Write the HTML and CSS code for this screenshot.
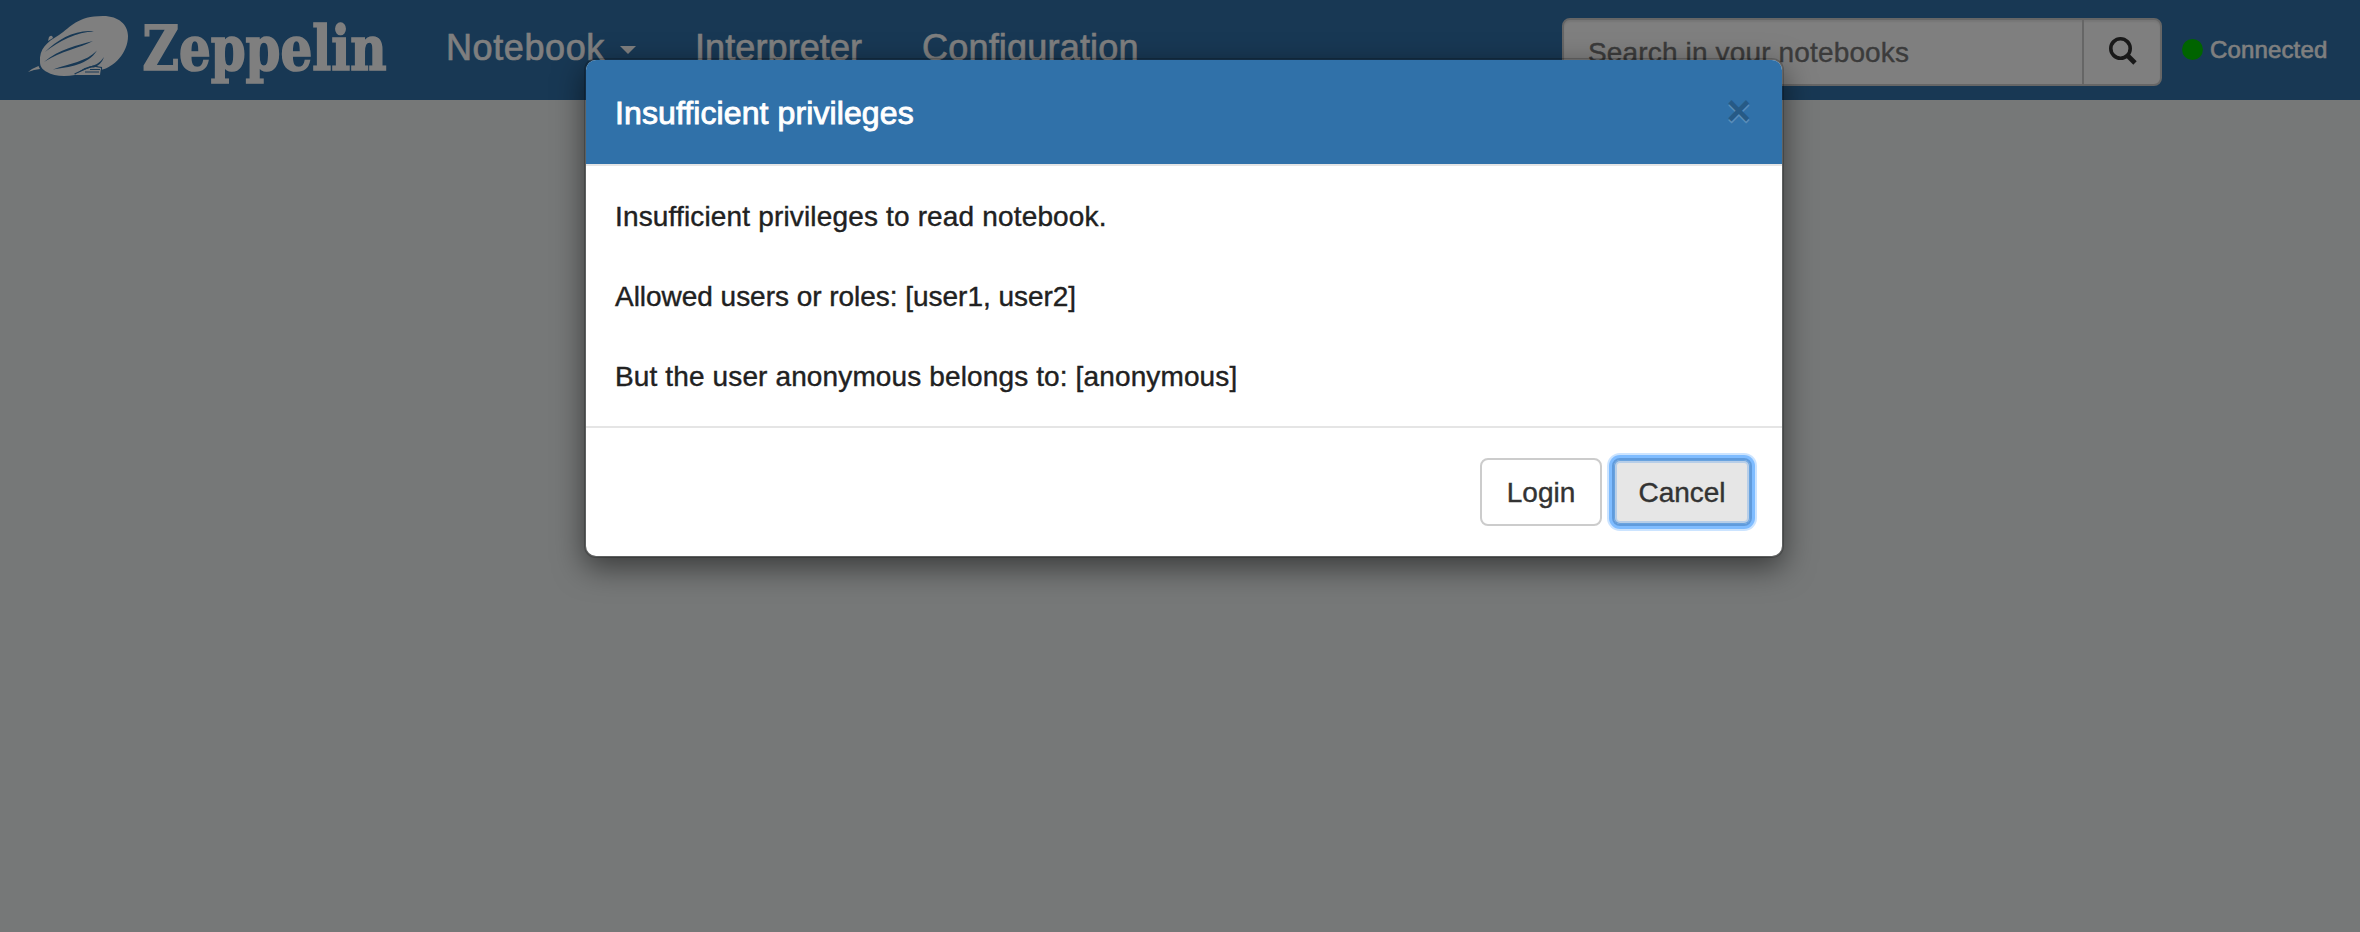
FILE: index.html
```
<!DOCTYPE html>
<html lang="en">
<head>
<meta charset="utf-8">
<title>Zeppelin</title>
<link rel="stylesheet" href="styles.css">
</head>
<body>
<header class="navbar">
  <a class="brand">
    <svg class="brand-logo" width="392" height="100" viewBox="0 0 392 100" aria-label="Zeppelin">
      <g fill="#fff">
        <path d="M40 62C39 49 47 42 59 35C71 27 77 16 103 16C119 16 128 25 128 36C128 53 114 67 101 70L97 66C88 66 84 68 80 71L75 75C64 77 53 76 47 72C43 70 40 67 40 62Z"/>
        <path d="M28 72L32 69L38.500 66L40 69L34 70Z"/>
        <path d="M48 41L49 37Q52 34 53 38Z"/>
        <path d="M75 74L84 70L93 66.500L101 67.500L100 75L76 75Z"/>
      </g>
      <g fill="#3071a9">
        <path d="M45 52C58 39 77 29 94 31.500C77 32 59 41 45 52Z"/>
        <path d="M44 62C59 49 78 45 93 41C80 48 61 51 44 62Z"/>
        <path d="M53 69.500C70 63 86 62 97 50.500C88 65 69 67 53 69.500Z"/>
        <path d="M86 67.500C95 66 100 63 104 57C102 63 98 66 94 67.500Z"/>
      </g>
      <g fill="none" stroke="#3071a9" stroke-width="1.100">
        <path d="M74.500 74L84 69.500L93 66L101.500 67.500V70"/>
        <path d="M90 69.500H100M85 72H99"/>
      </g>
      <text class="brand-text" x="142.500" y="69.500" textLength="244" lengthAdjust="spacingAndGlyphs">Zeppelin</text>
    </svg>
  </a>
  <nav class="menu">
    <a class="menu-notebook">Notebook<span class="caret"></span></a>
    <a class="menu-interpreter">Interpreter</a>
    <a class="menu-configuration">Configuration</a>
  </nav>
  <div class="search">
    <div class="search-input">Search in your notebooks</div>
    <div class="search-button">
      <svg width="30" height="30" viewBox="0 0 30 30" fill="none" stroke="#333">
        <circle cx="12.500" cy="12.500" r="9.700" stroke-width="3.600"/>
        <path d="M19 19L27 27" stroke-width="4.800"/>
      </svg>
    </div>
  </div>
  <div class="status"><span class="status-dot"></span><span class="status-label">Connected</span></div>
</header>
<div class="backdrop">
  <section class="modal">
    <div class="modal-header">
      <h4 class="modal-title">Insufficient privileges</h4>
      <span class="close">×</span>
    </div>
    <div class="modal-body">
      <p class="line-privileges">Insufficient privileges to read notebook.</p>
      <p class="line-allowed">Allowed users or roles: [user1, user2]</p>
      <p class="line-user">But the user anonymous belongs to: [anonymous]</p>
    </div>
    <div class="modal-footer">
      <button class="btn btn-login">Login</button>
      <button class="btn btn-cancel">Cancel</button>
    </div>
  </section>
</div>
</body>
</html>
```
FILE: styles.css
```
* { box-sizing: border-box; }
body {
  margin: 0;
  height: 932px;
  overflow: hidden;
  background: #ecf0f1;
  font: 28px/40px "Liberation Sans", Arial, sans-serif;
  color: #212121;
}
.navbar {
  display: flex;
  height: 100px;
  background: #3071a9;
  color: #fff;
}
.brand { display: block; width: 392px; height: 100px; }
.brand-logo { display: block; overflow: visible; }
.brand-text {
  font: bold 61px "DejaVu Serif Condensed", "DejaVu Serif", serif;
  fill: #fff;
  stroke: #fff;
  stroke-width: 1.6px;
}
.menu {
  display: flex;
  width: 1170px;
  padding: 28px 0 0 54px;
  font-size: 36px;
  -webkit-text-stroke: 0.6px #fff;
}
.menu a { white-space: nowrap; }
.menu-notebook { width: 249px; letter-spacing: 0.6px; }
.menu-interpreter { width: 227px; letter-spacing: 0.1px; }
.menu-configuration { letter-spacing: 0.2px; }
.caret {
  display: inline-block;
  margin-left: 15px;
  vertical-align: 6px;
  border-top: 8px solid #fff;
  border-left: 8px solid transparent;
  border-right: 8px solid transparent;
}
.search {
  display: flex;
  width: 600px;
  height: 68px;
  margin-top: 18px;
  border: 2px solid #ccc;
  border-radius: 8px;
  background: #fff;
  box-shadow: inset 0 2px 2px rgba(0, 0, 0, 0.075);
}
.search-input {
  width: 520px;
  padding: 13px 24px;
  border-right: 2px solid #ccc;
  color: #777;
  letter-spacing: 0.15px;
  -webkit-text-stroke: 0.4px #777;
}
.search-button {
  flex: 1;
  padding: 16px 0 0 24px;
}
.search-button svg { display: block; }
.status {
  display: flex;
  padding: 39px 0 0 20px;
  font-size: 24px;
}
.status-dot {
  width: 21px;
  height: 21px;
  border-radius: 50%;
  background: #00c800;
}
.status-label {
  margin: -9px 0 0 7px;
  letter-spacing: 0.15px;
  -webkit-text-stroke: 0.6px #fff;
}
.backdrop {
  position: absolute;
  inset: 0;
  padding-top: 58px;
  background: rgba(0, 0, 0, 0.5);
}
.modal {
  width: 1200px;
  height: 500px;
  margin: 0 0 0 584px;
  border: 2px solid rgba(0, 0, 0, 0.2);
  border-radius: 12px;
  background: #fff;
  background-clip: padding-box;
  box-shadow: 0 10px 30px rgba(0, 0, 0, 0.5);
}
.modal-header {
  display: flex;
  justify-content: space-between;
  height: 106px;
  padding: 30px 31px 0 29px;
  border-bottom: 2px solid #e5e5e5;
  border-radius: 10px 10px 0 0;
  background: #3071a9;
}
.modal-title {
  margin: 3px 0 0;
  color: #fff;
  font-size: 32px;
  font-weight: normal;
  letter-spacing: 0.1px;
  -webkit-text-stroke: 0.9px #fff;
}
.close {
  margin-top: 1px;
  font-size: 42px;
  font-weight: bold;
  color: #000;
  opacity: 0.2;
  text-shadow: 0 2px 0 #fff;
}
.modal-body {
  display: flex;
  flex-direction: column;
  gap: 40px;
  height: 260px;
  padding: 31px 29px 29px;
  -webkit-text-stroke: 0.4px #212121;
}
.modal-body p { margin: 0; white-space: nowrap; }
.line-privileges { letter-spacing: 0.16px; }
.line-allowed { letter-spacing: -0.03px; }
.line-user { letter-spacing: 0.13px; }
.modal-footer {
  display: flex;
  justify-content: flex-end;
  gap: 10px;
  height: 130px;
  padding: 30px;
  border-top: 2px solid #e5e5e5;
}
.btn {
  height: 68px;
  padding: 1px 0 0;
  border: 2px solid #ccc;
  border-radius: 8px;
  background: #fff;
  color: #333;
  font: inherit;
  -webkit-text-stroke: 0.4px #333;
}
.btn-login { width: 122px; }
.btn-cancel {
  width: 140px;
  border-color: #609bdc;
  background: #e6e6e6;
  box-shadow: 0 0 0 3px #7fbcff, 0 0 0 5px #cce4ff, inset 0 0 0 1px #69a3df, inset 0 0 0 3px #b7cee8;
}
```
